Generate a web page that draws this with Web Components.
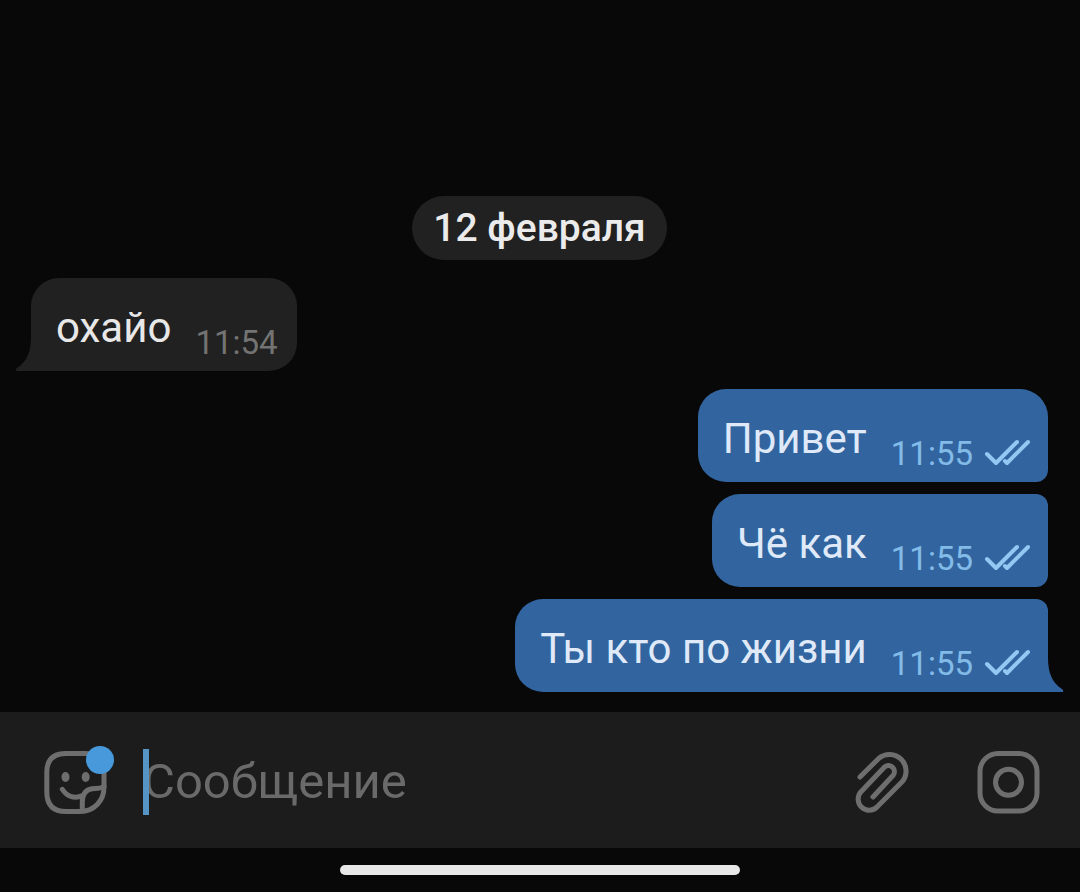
<!DOCTYPE html>
<html lang="ru">
<head>
<meta charset="utf-8">
<meta name="viewport" content="width=device-width, initial-scale=1">
<title>Чат</title>
<style>
  html, body { margin: 0; background: #080808; }
  body { font-family: Roboto, "Noto Sans", sans-serif; color: #e8e8e8; }
</style>
</head>
<body>
<chat-screen>
  <date-chip>12 февраля</date-chip>
  <chat-group>
    <chat-message time="11:54" tail>охайо</chat-message>
  </chat-group>
  <chat-group outgoing>
    <chat-message time="11:55" outgoing first>Привет</chat-message>
    <chat-message time="11:55" outgoing>Чё как</chat-message>
    <chat-message time="11:55" outgoing tail>Ты кто по жизни</chat-message>
  </chat-group>
  <message-composer slot="footer"></message-composer>
  <gesture-bar slot="footer"></gesture-bar>
</chat-screen>

<script>
class ShadowElement extends HTMLElement {
  constructor() {
    super();
    this.attachShadow({ mode: "open" }).innerHTML = this.render();
  }
}

customElements.define("chat-screen", class extends ShadowElement {
  render() {
    return `
      <style>
        :host { display: flex; flex-direction: column; min-height: 100vh; }
        main { flex: 1; display: flex; flex-direction: column; justify-content: flex-end; gap: 18px; padding: 20px 32px 20px 31px; }
      </style>
      <main><slot></slot></main>
      <slot name="footer"></slot>`;
  }
});

customElements.define("date-chip", class extends ShadowElement {
  render() {
    return `
      <style>
        :host { display: block; align-self: center; padding: 0 21px; border-radius: 32px; background: #212121;
                color: #ebebeb; font-size: 39px; font-weight: 500; line-height: 64px; }
      </style>
      <slot></slot>`;
  }
});

customElements.define("chat-group", class extends ShadowElement {
  render() {
    return `
      <style>
        :host { display: flex; flex-direction: column; align-items: flex-start; gap: 12px; }
        :host([outgoing]) { align-items: flex-end; }
      </style>
      <slot></slot>`;
  }
});

customElements.define("chat-message", class extends ShadowElement {
  render() {
    const outgoing = this.hasAttribute("outgoing");
    const tail = !this.hasAttribute("tail") ? "" : outgoing
      ? `<svg class="tail" viewBox="0 0 18 40" aria-hidden="true"><path d="M0 0H2V6C2 20 6 31 16 37Q18 38 17 40H0Z"/></svg>`
      : `<svg class="tail" viewBox="0 0 18 40" aria-hidden="true"><path d="M18 0H16V6C16 20 12 31 2 37Q0 38 1 40H18Z"/></svg>`;
    const checks = outgoing
      ? `<svg class="checks" viewBox="0 0 46 28" role="img" aria-label="Прочитано"><path d="M3 15L12 24L33 3M21 22L23 24L44 3"/></svg>`
      : "";
    return `
      <style>
        :host { display: flex; align-items: flex-end; position: relative; box-sizing: border-box; max-width: 100%;
                padding: 25px 19px 9px 25px; border-radius: 28px; --bubble: #212121; background: var(--bubble); }
        :host([tail]) { border-bottom-left-radius: 0; }
        :host([outgoing]) { --bubble: #32659f; padding-right: 18px; border-radius: 28px 12px 12px 28px; color: #dfe9f8; }
        :host([outgoing][first]) { border-top-right-radius: 28px; }
        :host([outgoing][tail]) { border-bottom-right-radius: 0; border-bottom-left-radius: 28px; }
        .text { font-size: 42px; line-height: 49px; margin-bottom: 10px; }
        time { margin-left: 24px; font-size: 33px; line-height: 39px; color: #737373; }
        :host([outgoing]) time { color: #83bbe8; }
        .checks { flex: none; width: 46px; height: 28px; margin: 0 0 6px 11px; fill: none; stroke: #93c8f3;
                  stroke-width: 4; stroke-linecap: round; stroke-linejoin: round; }
        .tail { position: absolute; bottom: 0; left: -16px; width: 18px; height: 40px; fill: var(--bubble); }
        :host([outgoing]) .tail { left: auto; right: -16px; }
      </style>
      <span class="text"><slot></slot></span>
      <time>${this.getAttribute("time")}</time>${checks}${tail}`;
  }
});

customElements.define("message-composer", class extends ShadowElement {
  render() {
    return `
      <style>
        :host { display: flex; align-items: center; min-height: 136px; padding: 4px 32px 0 36px; background: #1c1c1c; box-sizing: border-box; }
        button { flex: none; width: 80px; height: 80px; padding: 0; border: 0; background: none; }
        svg { display: block; width: 80px; height: 80px; fill: none; stroke: #6e6e6e; stroke-width: 5; stroke-linecap: round; stroke-linejoin: round; }
        .field { position: relative; flex: 1; min-width: 0; margin-left: 27px; }
        input { display: block; width: 100%; height: 66px; padding: 0; border: 0; outline: 0;
                background: none; color: #e8e8e8; font: 49px/66px Roboto, "Noto Sans", sans-serif; }
        input::placeholder { color: #6a6a6a; opacity: 1; }
        .caret { position: absolute; left: 0; top: 0; width: 6px; height: 66px; background: #5495c6; }
        .actions { display: flex; gap: 46px; }
      </style>
      <button type="button" aria-label="Стикеры">
        <svg viewBox="0 0 80 80" aria-hidden="true">
          <path d="M68 30Q68 11.500 49 11.500H30Q10.800 11.500 10.800 30.500V50Q10.800 69.500 30 69.500H44C58 69.500 68 59 68 45Z"/>
          <path d="M26.300 47.300C31 55 39 57 46.500 53.500M46.300 69V60C46.500 51 51 46.500 59 46.500Q65 46.500 68 44.500"/>
          <g fill="#6e6e6e" stroke="none"><ellipse cx="29.500" cy="35" rx="4" ry="5"/><ellipse cx="49.700" cy="35" rx="4" ry="5"/></g>
          <circle cx="64" cy="18" r="14" fill="#4799db" stroke="none"/>
        </svg>
      </button>
      <div class="field">
        <input type="text" aria-label="Сообщение" placeholder="Сообщение">
        <span class="caret" aria-hidden="true"></span>
      </div>
      <div class="actions">
        <button type="button" aria-label="Прикрепить файл">
          <svg viewBox="0 0 80 80" aria-hidden="true"><path d="M18 35L36.700 16.400A16.600 16.600 0 0 1 60.100 39.800L34.500 65.500A11.100 11.100 0 0 1 18.800 49.900L42.800 24.800A6 6 0 0 1 51.200 33.200L31 55"/></svg>
        </button>
        <button type="button" aria-label="Камера">
          <svg viewBox="0 0 80 80" aria-hidden="true"><rect x="12" y="11.500" width="57" height="57.500" rx="18"/><circle cx="40.500" cy="40.300" r="13"/></svg>
        </button>
      </div>`;
  }
});

customElements.define("gesture-bar", class extends ShadowElement {
  render() {
    return `
      <style>
        :host { display: flex; justify-content: center; align-items: center; height: 44px; }
        span { width: 37%; height: 10px; border-radius: 5px; background: #e8e8e8; }
      </style>
      <span></span>`;
  }
});
</script>
</body>
</html>
